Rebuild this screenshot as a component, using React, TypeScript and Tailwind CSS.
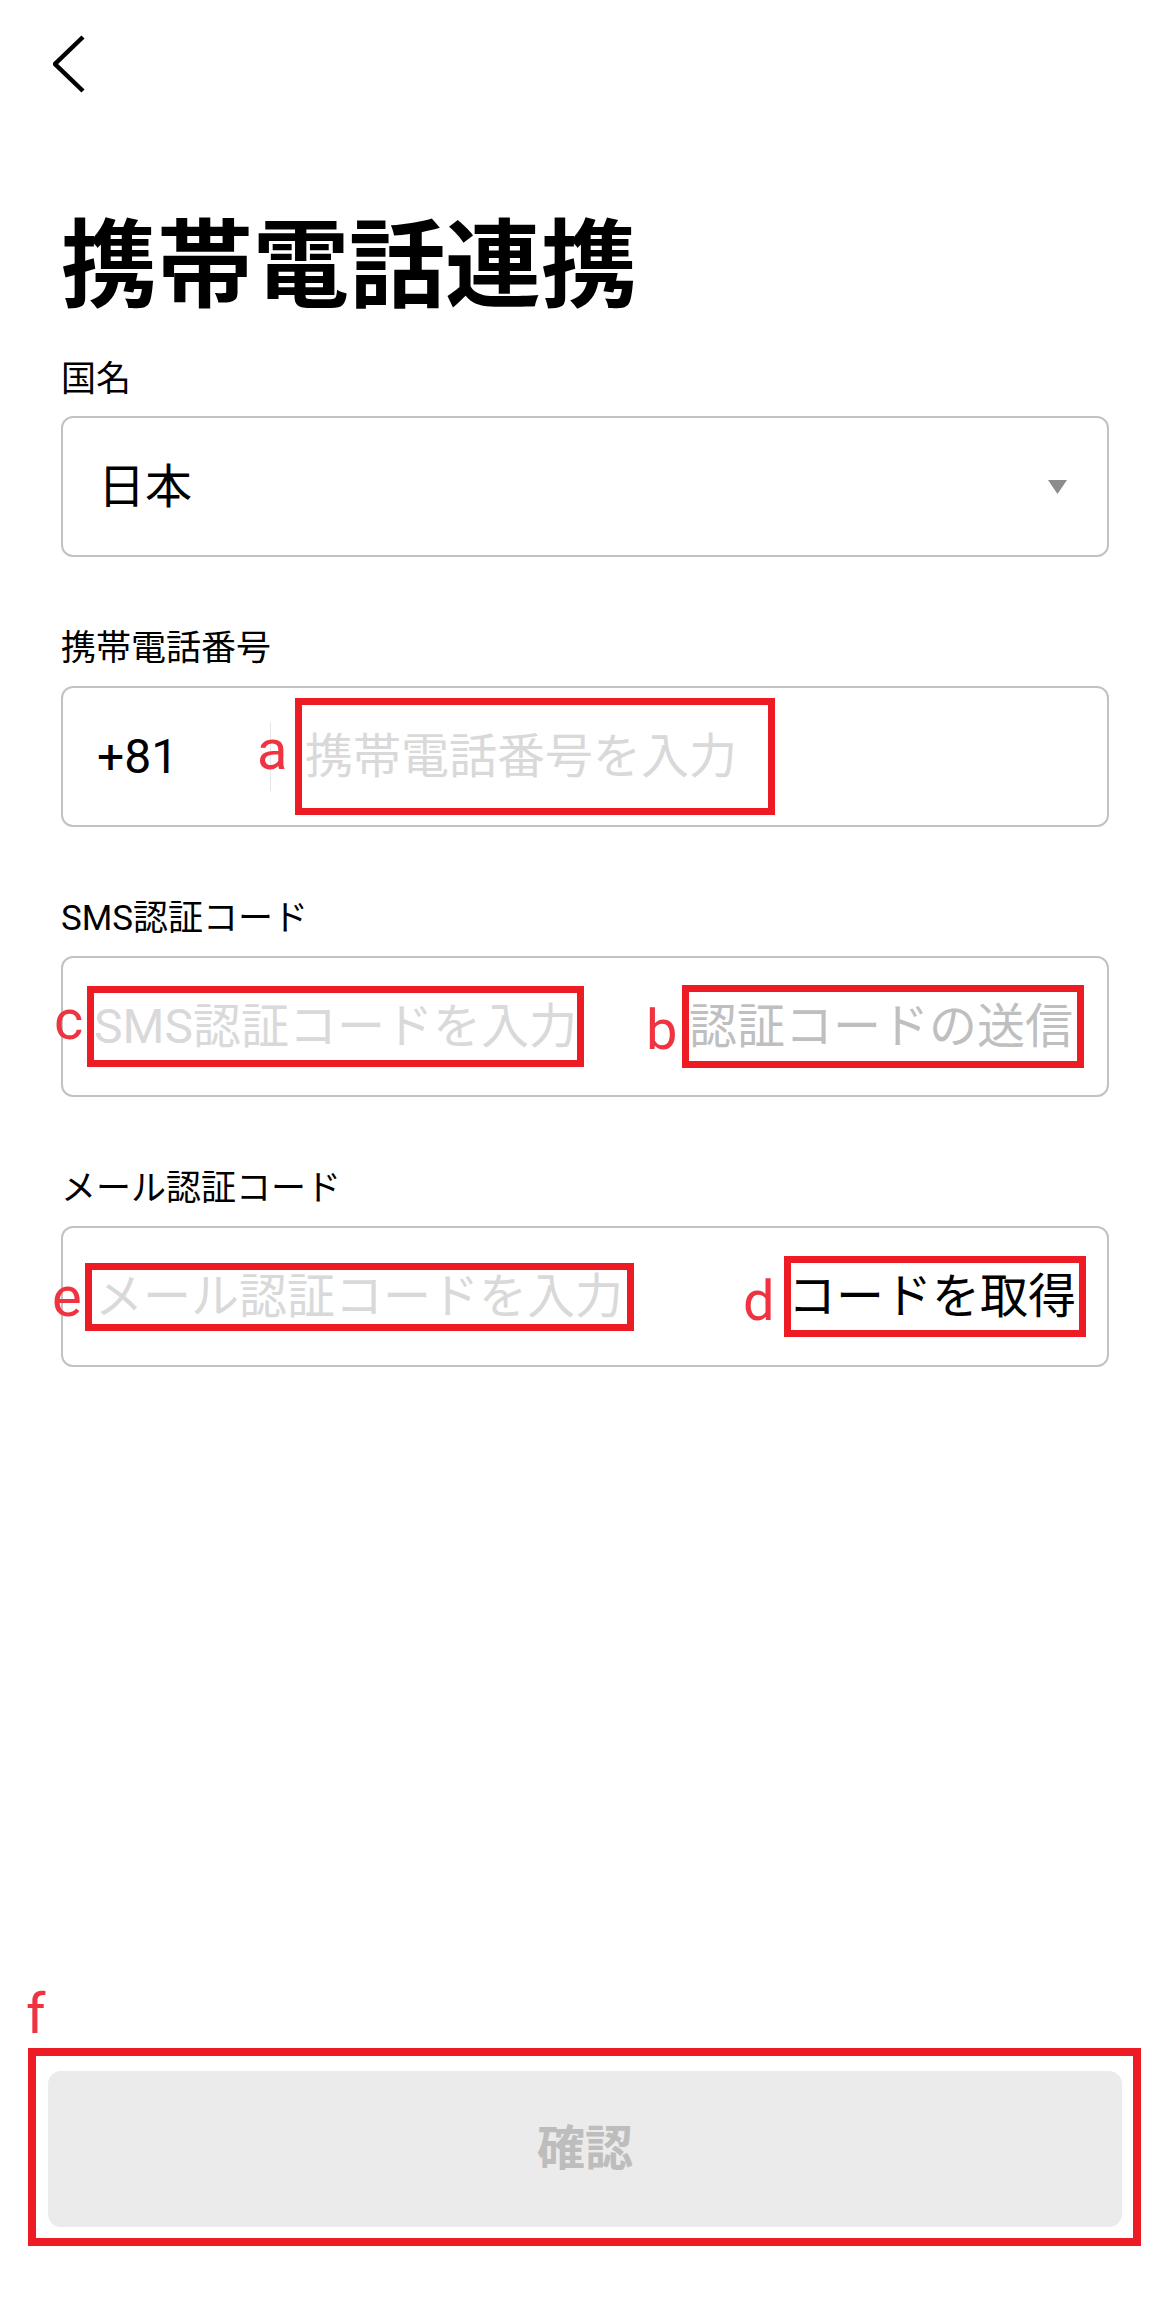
import React from 'react';

// red annotation frame drawn around a piece of the form
const Mark: React.FC<{ className: string; children: React.ReactNode }> = ({ className, children }) => (
  <div className={`relative flex items-center border-[7px] border-[#ed1c24] whitespace-nowrap ${className}`}>
    {children}
  </div>
);

// annotation letter next to a frame
const Tag: React.FC<{ className: string; children: React.ReactNode }> = ({ className, children }) => (
  <span className={`absolute text-[56px] leading-none text-[#ef3340] ${className}`}>{children}</span>
);

const Label: React.FC<{ children: React.ReactNode }> = ({ children }) => (
  <div className="mt-[74px] text-[35px] leading-none text-black whitespace-nowrap">{children}</div>
);

const Box: React.FC<{ className?: string; children: React.ReactNode }> = ({ className = '', children }) => (
  <div className={`mt-[20px] h-[141px] rounded-[12px] border-2 border-[#c2c2c2] flex items-center ${className}`}>
    {children}
  </div>
);

const App: React.FC = () => {
  return (
    <div className="w-[1166px] min-h-[2305px] bg-white flex flex-col font-['Roboto','Noto_Sans_CJK_JP',sans-serif]">
      <div className="h-[218px] pl-[53px] pt-[35px]">
        <svg width="32" height="58" viewBox="0 0 32 58" fill="none">
          <polyline points="30,2 2,29 30,56" stroke="#000" strokeWidth="4.5" strokeLinejoin="miter" />
        </svg>
      </div>

      <div className="pl-[61px] pr-[57px] flex flex-col">
        <h1 className="text-[96px] font-bold leading-none text-black whitespace-nowrap">携帯電話連携</h1>

        <div className="mt-[48px] text-[35px] leading-none text-black">国名</div>
        <div className="mt-[19px] h-[141px] rounded-[12px] border-2 border-[#c2c2c2] flex items-center justify-between pl-[35px] pr-[40px]">
          <span className="text-[47px] leading-none text-black">日本</span>
          <svg width="19" height="14" viewBox="0 0 19 14">
            <path d="M0 0H19L9.5 14Z" fill="#8c8c8c" />
          </svg>
        </div>

        <Label>携帯電話番号</Label>
        <Box className="pl-[34px]">
          <span className="w-[173px] text-[48px] leading-none text-black">+81</span>
          <div className="w-px h-[69px] bg-[#e6e6e6]" />
          <Mark className="ml-[24px] w-[480px] h-[117px] pl-[3px]">
            <Tag className="top-[17px] left-[-45px]">a</Tag>
            <span className="text-[48px] leading-none text-[#d9d9d9]">携帯電話番号を入力</span>
          </Mark>
        </Box>

        <Label>SMS認証コード</Label>
        <Box className="pl-[24px]">
          <Mark className="w-[497px] h-[81px]">
            <Tag className="top-[-1px] left-[-40px]">c</Tag>
            <span className="text-[48px] leading-none text-[#d9d9d9]">SMS認証コードを入力</span>
          </Mark>
          <Mark className="ml-[98px] w-[402px] h-[83px]">
            <Tag className="top-[10px] left-[-43px]">b</Tag>
            <span className="text-[48px] leading-none text-[#bfbfbf]">認証コードの送信</span>
          </Mark>
        </Box>

        <Label>メール認証コード</Label>
        <Box className="pl-[22px]">
          <Mark className="w-[549px] h-[68px] pl-[3px]">
            <Tag className="top-[-1px] left-[-40px]">e</Tag>
            <span className="text-[48px] leading-none text-[#d9d9d9]">メール認証コードを入力</span>
          </Mark>
          <Mark className="ml-[150px] w-[302px] h-[81px]">
            <Tag className="top-[10px] left-[-48px]">d</Tag>
            <span className="-ml-[3px] text-[48px] leading-none text-black">コードを取得</span>
          </Mark>
        </Box>
      </div>

      <div className="mt-auto mb-[59px] ml-[28px] w-[1113px] relative border-[8px] border-[#ed1c24] pt-[15px] pl-[12px] pr-[11px] pb-[11px]">
        <Tag className="top-[-70px] left-[-10px]">f</Tag>
        <button
          type="button"
          disabled
          className="w-full h-[156px] rounded-[13px] bg-[#ebebeb] text-[48px] font-bold leading-none text-[#bdbdbd] flex items-center justify-center"
        >
          確認
        </button>
      </div>
    </div>
  );
};

export default App;
